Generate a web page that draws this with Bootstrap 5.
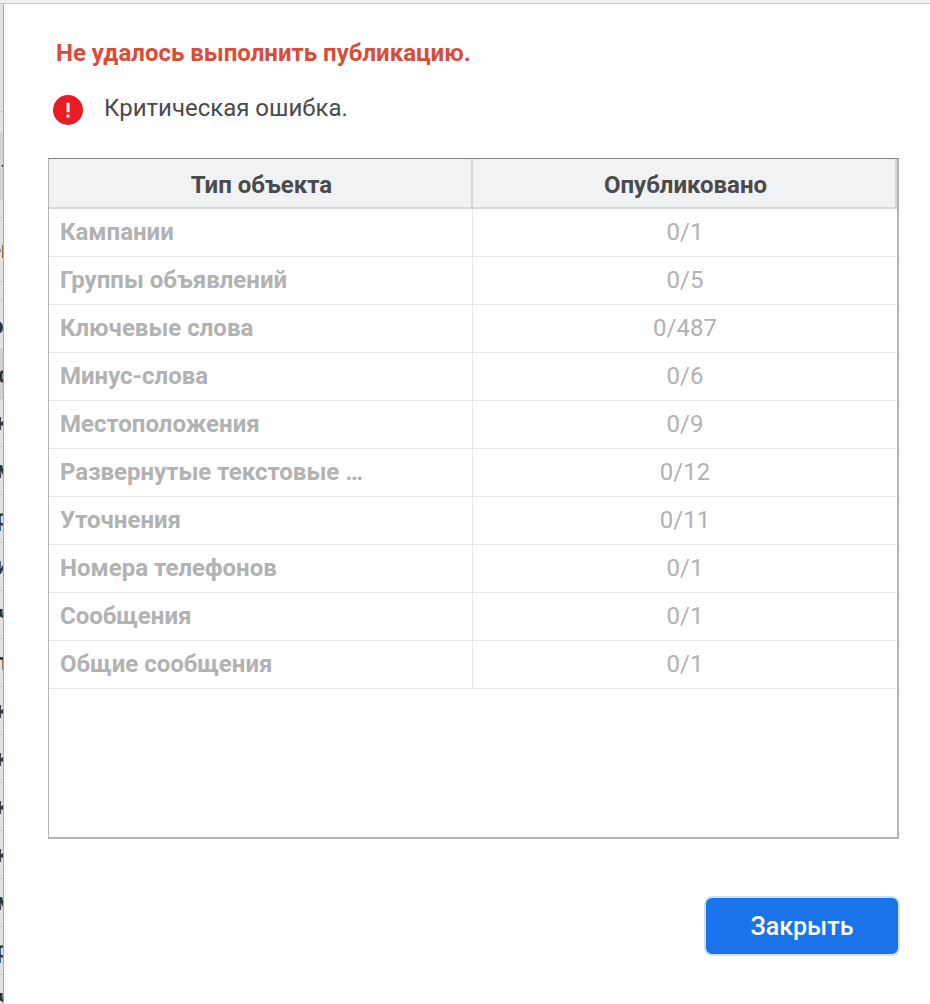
<!DOCTYPE html>
<html lang="ru">
<head>
<meta charset="utf-8">
<meta name="viewport" content="width=device-width, initial-scale=1">
<title>Публикация</title>
<link href="https://cdn.jsdelivr.net/npm/bootstrap@5.3.0/dist/css/bootstrap.min.css" rel="stylesheet">
<style>
body{font-family:Roboto,"Noto Sans",sans-serif;font-size:24px;line-height:32px;color:#4a4a4c;background:#f1f1f2}
.topline{height:4px;border-bottom:1px solid #c9c9ca}
/* sliver of the list behind the dialog */
.behind{width:4px;background:#e2e2e2;border-right:1px solid #a9a9a9;color:#333;font-weight:700;white-space:nowrap}
.behind div{height:48px;line-height:46px;border-bottom:1px solid #c4c4c4;text-indent:-4px;overflow:hidden}
.behind .h-blank{height:108px}
.behind .h-bar{height:106px;line-height:108px;font-weight:400;text-indent:0;background:linear-gradient(#e2e2e2 20px,#d2d3d4 20px 88px,#e2e2e2 88px)}
.behind .h-tall{height:64px;line-height:64px;text-indent:-12px}
.behind .h-gap{height:18px}
.behind .h-sub{height:50px;line-height:52px;text-indent:-10px}
.behind .chosen{height:49px;line-height:50px;background:#cfd0d4}
.behind .round{text-indent:-2px}
.dialog-pane{padding:33px 31px 48px 44px}
.headline{color:#dc4b38;font-size:24px;line-height:32px;padding-left:8px;margin-bottom:23px}
.notice{gap:20px;padding-left:4px;margin-bottom:34px}
.frame{border:1px solid #b3b3b5;border-top-color:#858587;border-right-width:2px;border-bottom-width:2px;height:681px}
.grid-table{table-layout:fixed;border-collapse:separate;border-spacing:0}
.grid-table th,.grid-table td{width:50%;height:48px;padding:0 11px;font-size:24px;line-height:32px;vertical-align:middle;white-space:nowrap}
.grid-table thead th{height:50px;padding-top:3px;padding-right:8px;background:#f1f2f4;border-right:2px solid #d7d8da;border-bottom:2px solid #d7d8da;text-align:center;color:#4a4a4c}
.grid-table tbody th,.grid-table tbody td{border-bottom:1px solid #e6e6e6;color:#b2b2b2;padding-bottom:2px}
.grid-table tbody th{border-right:1px solid #e6e6e6}
.grid-table tbody td{text-align:center}
.btn-shut{--bs-btn-bg:#1a73e8;--bs-btn-color:#fff;--bs-btn-hover-bg:#1765cc;--bs-btn-hover-color:#fff;--bs-btn-border-color:#cfe0f5;border-width:2px;border-radius:8px;width:196px;height:60px;font-size:25px;font-weight:500;padding:8px 12px 6px;margin:57px -1px 0 0}
</style>
<script src="https://cdn.jsdelivr.net/npm/bootstrap@5.3.0/dist/js/bootstrap.bundle.min.js"></script>
</head>
<body class="vh-100 overflow-hidden d-flex flex-column">
<div class="topline flex-shrink-0"></div>
<div class="d-flex flex-grow-1 overflow-hidden">
<aside class="behind flex-shrink-0 overflow-hidden" aria-hidden="true">
<div class="h-blank"></div><div class="h-bar">·</div><div class="h-tall">ен</div><div class="h-gap"></div><div class="h-sub">он</div><div class="chosen round">с</div><div>к</div><div>м</div><div>р</div><div>и</div><div class="round">ч</div><div class="round">т</div><div>к</div><div>к</div><div>к</div><div>к</div><div>м</div><div>р</div><div class="round">ч</div>
</aside>
<main class="dialog-pane flex-grow-1 bg-white" role="dialog" aria-labelledby="headline">
<h1 class="headline fw-bold" id="headline">Не удалось выполнить публикацию.</h1>
<div class="notice d-flex align-items-center">
<svg class="overflow-visible" width="32" height="32" viewBox="0 0 32 32" aria-hidden="true"><circle cx="16" cy="18" r="15" fill="#e81c24"/><path d="M14.6 10.7h2.9v9.5h-2.9zM14.6 22.5h2.9v2.9h-2.9z" fill="#fff"/></svg>
<span>Критическая ошибка.</span>
</div>
<div class="frame">
<table class="grid-table w-100">
<thead><tr><th scope="col">Тип объекта</th><th scope="col">Опубликовано</th></tr></thead>
<tbody>
<tr><th scope="row">Кампании</th><td>0/1</td></tr>
<tr><th scope="row">Группы объявлений</th><td>0/5</td></tr>
<tr><th scope="row">Ключевые слова</th><td>0/487</td></tr>
<tr><th scope="row">Минус-слова</th><td>0/6</td></tr>
<tr><th scope="row">Местоположения</th><td>0/9</td></tr>
<tr><th scope="row">Развернутые текстовые …</th><td>0/12</td></tr>
<tr><th scope="row">Уточнения</th><td>0/11</td></tr>
<tr><th scope="row">Номера телефонов</th><td>0/1</td></tr>
<tr><th scope="row">Сообщения</th><td>0/1</td></tr>
<tr><th scope="row">Общие сообщения</th><td>0/1</td></tr>
</tbody>
</table>
</div>
<div class="d-flex justify-content-end"><button type="button" class="btn btn-shut">Закрыть</button></div>
</main>
</div>
</body>
</html>
